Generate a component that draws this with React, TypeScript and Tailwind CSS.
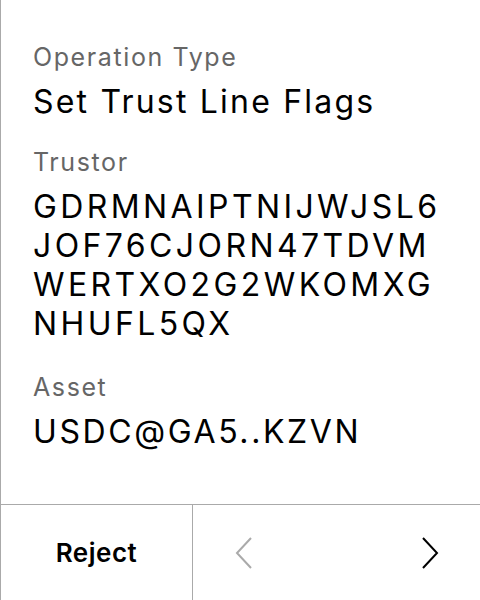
import { ReactNode } from "react"

function Field({ label, children }: { label: string; children: ReactNode }) {
  return (
    <div className="flex flex-col gap-[10px]">
      <div className="text-[25px] leading-[30px] tracking-[1.6px] text-[#666666]">{label}</div>
      <div className="text-[32px] leading-[39px] tracking-[2.2px] text-black">{children}</div>
    </div>
  )
}

function Chevron({ dir, color }: { dir: "left" | "right"; color: string }) {
  return (
    <svg width="18" height="32" viewBox="0 0 18 32" fill="none">
      <path
        d={dir === "left" ? "M16 1 L2 16 L16 31" : "M2 1 L16 16 L2 31"}
        stroke={color}
        strokeWidth="2"
      />
    </svg>
  )
}

export default function App() {
  return (
    <div
      className="w-[480px] h-[600px] bg-white flex flex-col border-l border-[#aaaaaa]"
      style={{ fontFamily: "Inter, 'Noto Sans', sans-serif" }}
    >
      {/* Details */}
      <div className="flex-1 flex flex-col gap-[26px] pt-[42px] pl-[32px]">
        <Field label="Operation Type">Set Trust Line Flags</Field>
        <Field label="Trustor">
          <div className="tracking-[3.4px]">
            GDRMNAIPTNIJWJSL6
            <br />
            JOF76CJORN47TDVM
            <br />
            WERTXO2G2WKOMXG
            <br />
            NHUFL5QX
          </div>
        </Field>
        <div className="mt-[3px]">
          <Field label="Asset">
            <span className="tracking-[2.6px]">USDC@GA5..KZVN</span>
          </Field>
        </div>
      </div>

      {/* Footer */}
      <div className="h-[96px] flex border-t border-[#aaaaaa]">
        <button className="w-[192px] flex items-center justify-center text-[26px] font-semibold tracking-[0.5px] text-black border-r border-[#aaaaaa]">
          Reject
        </button>
        <div className="flex-1 flex items-center justify-between pl-[42px] pr-[41px]">
          <button className="flex items-center">
            <Chevron dir="left" color="#aaaaaa" />
          </button>
          <button className="flex items-center">
            <Chevron dir="right" color="#000000" />
          </button>
        </div>
      </div>
    </div>
  )
}
